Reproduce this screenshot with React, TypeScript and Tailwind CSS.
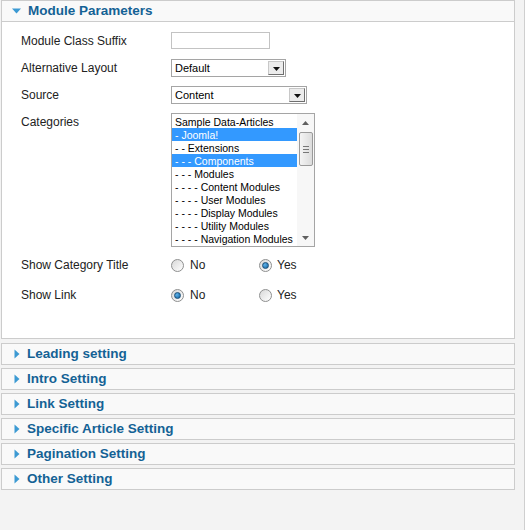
import React from "react";

const categories = [
  { label: "Sample Data-Articles", selected: false },
  { label: "- Joomla!", selected: true },
  { label: "- - Extensions", selected: false },
  { label: "- - - Components", selected: true },
  { label: "- - - Modules", selected: false },
  { label: "- - - - Content Modules", selected: false },
  { label: "- - - - User Modules", selected: false },
  { label: "- - - - Display Modules", selected: false },
  { label: "- - - - Utility Modules", selected: false },
  { label: "- - - - Navigation Modules", selected: false },
];

const sections = [
  "Leading setting",
  "Intro Setting",
  "Link Setting",
  "Specific Article Setting",
  "Pagination Setting",
  "Other Setting",
];

const font = "font-['Liberation_Sans',Arial,sans-serif]";

function Caret({ open }: { open?: boolean }) {
  return open ? (
    <svg width="9" height="6" viewBox="0 0 9 6" className="shrink-0">
      <path d="M0 0.5h9L4.5 5.5z" fill="#3c9ad3" />
    </svg>
  ) : (
    <svg width="6" height="10" viewBox="0 0 6 10" className="shrink-0">
      <path d="M0.5 0.5v9L5.5 5z" fill="#3c9ad3" />
    </svg>
  );
}

function SelectBox({ value, width }: { value: string; width: string }) {
  return (
    <div
      className={`${width} h-[18px] border border-[#a5a5a5] bg-white flex items-center justify-between pl-[3px] pr-px`}
    >
      <span className="text-[11px] leading-none text-black pt-px">{value}</span>
      <span className="w-[16px] h-[14px] border border-[#c8c8c8] border-r-[#6f6f6f] border-b-[#6f6f6f] bg-[#ececec] flex items-end justify-center pb-[3px]">
        <svg width="7" height="4" viewBox="0 0 7 4">
          <path d="M0 0h7L3.5 4z" fill="#111" />
        </svg>
      </span>
    </div>
  );
}

function Radio({ checked }: { checked?: boolean }) {
  return (
    <span className="w-[13px] h-[13px] rounded-full border border-[#8e8f8f] bg-[linear-gradient(135deg,#d8d8d8,#ffffff)] flex items-center justify-center shrink-0">
      {checked && (
        <span className="w-[7px] h-[7px] rounded-full bg-[radial-gradient(circle_at_35%_35%,#5fb3ea,#0f5f9c)] border border-[#1b4f78]" />
      )}
    </span>
  );
}

function RadioRow({ label, yes }: { label: string; yes: boolean }) {
  return (
    <div className="flex items-center h-[20px]">
      <div className="w-[150px] text-[12px] text-[#222]">{label}</div>
      <div className="w-[88px] flex items-center gap-[6px]">
        <Radio checked={!yes} />
        <span className="text-[12px] text-[#222]">No</span>
      </div>
      <div className="flex items-center gap-[5px]">
        <Radio checked={yes} />
        <span className="text-[12px] text-[#222]">Yes</span>
      </div>
    </div>
  );
}

function ListBox() {
  return (
    <div className="w-[144px] h-[134px] border border-[#a5a5a5] bg-white flex">
      <div className="flex-1 pt-px overflow-hidden">
        {categories.map((c) => (
          <div
            key={c.label}
            className={`h-[13px] leading-[14px] text-[10.5px] pl-[3px] whitespace-nowrap ${
              c.selected ? "bg-[#3399ff] text-white" : "text-black"
            }`}
          >
            {c.label}
          </div>
        ))}
      </div>
      <div className="w-[17px] bg-[#f7f7f7] flex flex-col items-center">
        <div className="h-[17px] flex items-center justify-center">
          <svg width="7" height="4" viewBox="0 0 7 4">
            <path d="M0 4h7L3.5 0z" fill="#606060" />
          </svg>
        </div>
        <div className="w-[14px] h-[34px] mt-px border border-[#9a9a9a] rounded-[2px] bg-[linear-gradient(90deg,#f4f4f4,#dcdcdc)] flex flex-col items-center justify-center gap-[2px]">
          <span className="w-[6px] h-px bg-[#777]" />
          <span className="w-[6px] h-px bg-[#777]" />
          <span className="w-[6px] h-px bg-[#777]" />
        </div>
        <div className="flex-1" />
        <div className="h-[17px] flex items-center justify-center">
          <svg width="7" height="4" viewBox="0 0 7 4">
            <path d="M0 0h7L3.5 4z" fill="#606060" />
          </svg>
        </div>
      </div>
    </div>
  );
}

export default function App() {
  return (
    <div className={`w-[525px] h-[530px] bg-[#f3f3f3] border-r border-[#cfcfcf] ${font}`}>
      <div className="w-[514px] ml-px">
        {/* Open panel */}
        <div className="h-[22px] border border-[#cccccc] bg-[#f9f9f9] flex items-center gap-[7px] pl-[10px]">
          <Caret open />
          <span className="text-[13.5px] font-bold text-[#146295] pt-px">Module Parameters</span>
        </div>
        <div className="h-[317px] border border-t-0 border-[#cccccc] bg-white pl-[19px] pt-[10px]">
          <div className="flex items-center h-[17px]">
            <div className="w-[150px] text-[12px] text-[#222]">Module Class Suffix</div>
            <div className="w-[99px] h-[17px] border border-[#c3c3c3] bg-white" />
          </div>
          <div className="flex items-center h-[18px] mt-[10px]">
            <div className="w-[150px] text-[12px] text-[#222]">Alternative Layout</div>
            <SelectBox value="Default" width="w-[115px]" />
          </div>
          <div className="flex items-center h-[18px] mt-[9px]">
            <div className="w-[150px] text-[12px] text-[#222]">Source</div>
            <SelectBox value="Content" width="w-[136px]" />
          </div>
          <div className="flex items-start mt-[9px]">
            <div className="w-[150px] text-[12px] text-[#222]">Categories</div>
            <ListBox />
          </div>
          <div className="mt-[8px]">
            <RadioRow label="Show Category Title" yes />
          </div>
          <div className="mt-[10px]">
            <RadioRow label="Show Link" yes={false} />
          </div>
        </div>

        {/* Collapsed panels */}
        <div className="mt-[4px] flex flex-col gap-[3px]">
          {sections.map((s) => (
            <div
              key={s}
              className="h-[22px] border border-[#cccccc] bg-[#f9f9f9] flex items-center gap-[7px] pl-[12px]"
            >
              <Caret />
              <span className="text-[13.5px] font-bold text-[#146295] pt-px">{s}</span>
            </div>
          ))}
        </div>
      </div>
    </div>
  );
}
